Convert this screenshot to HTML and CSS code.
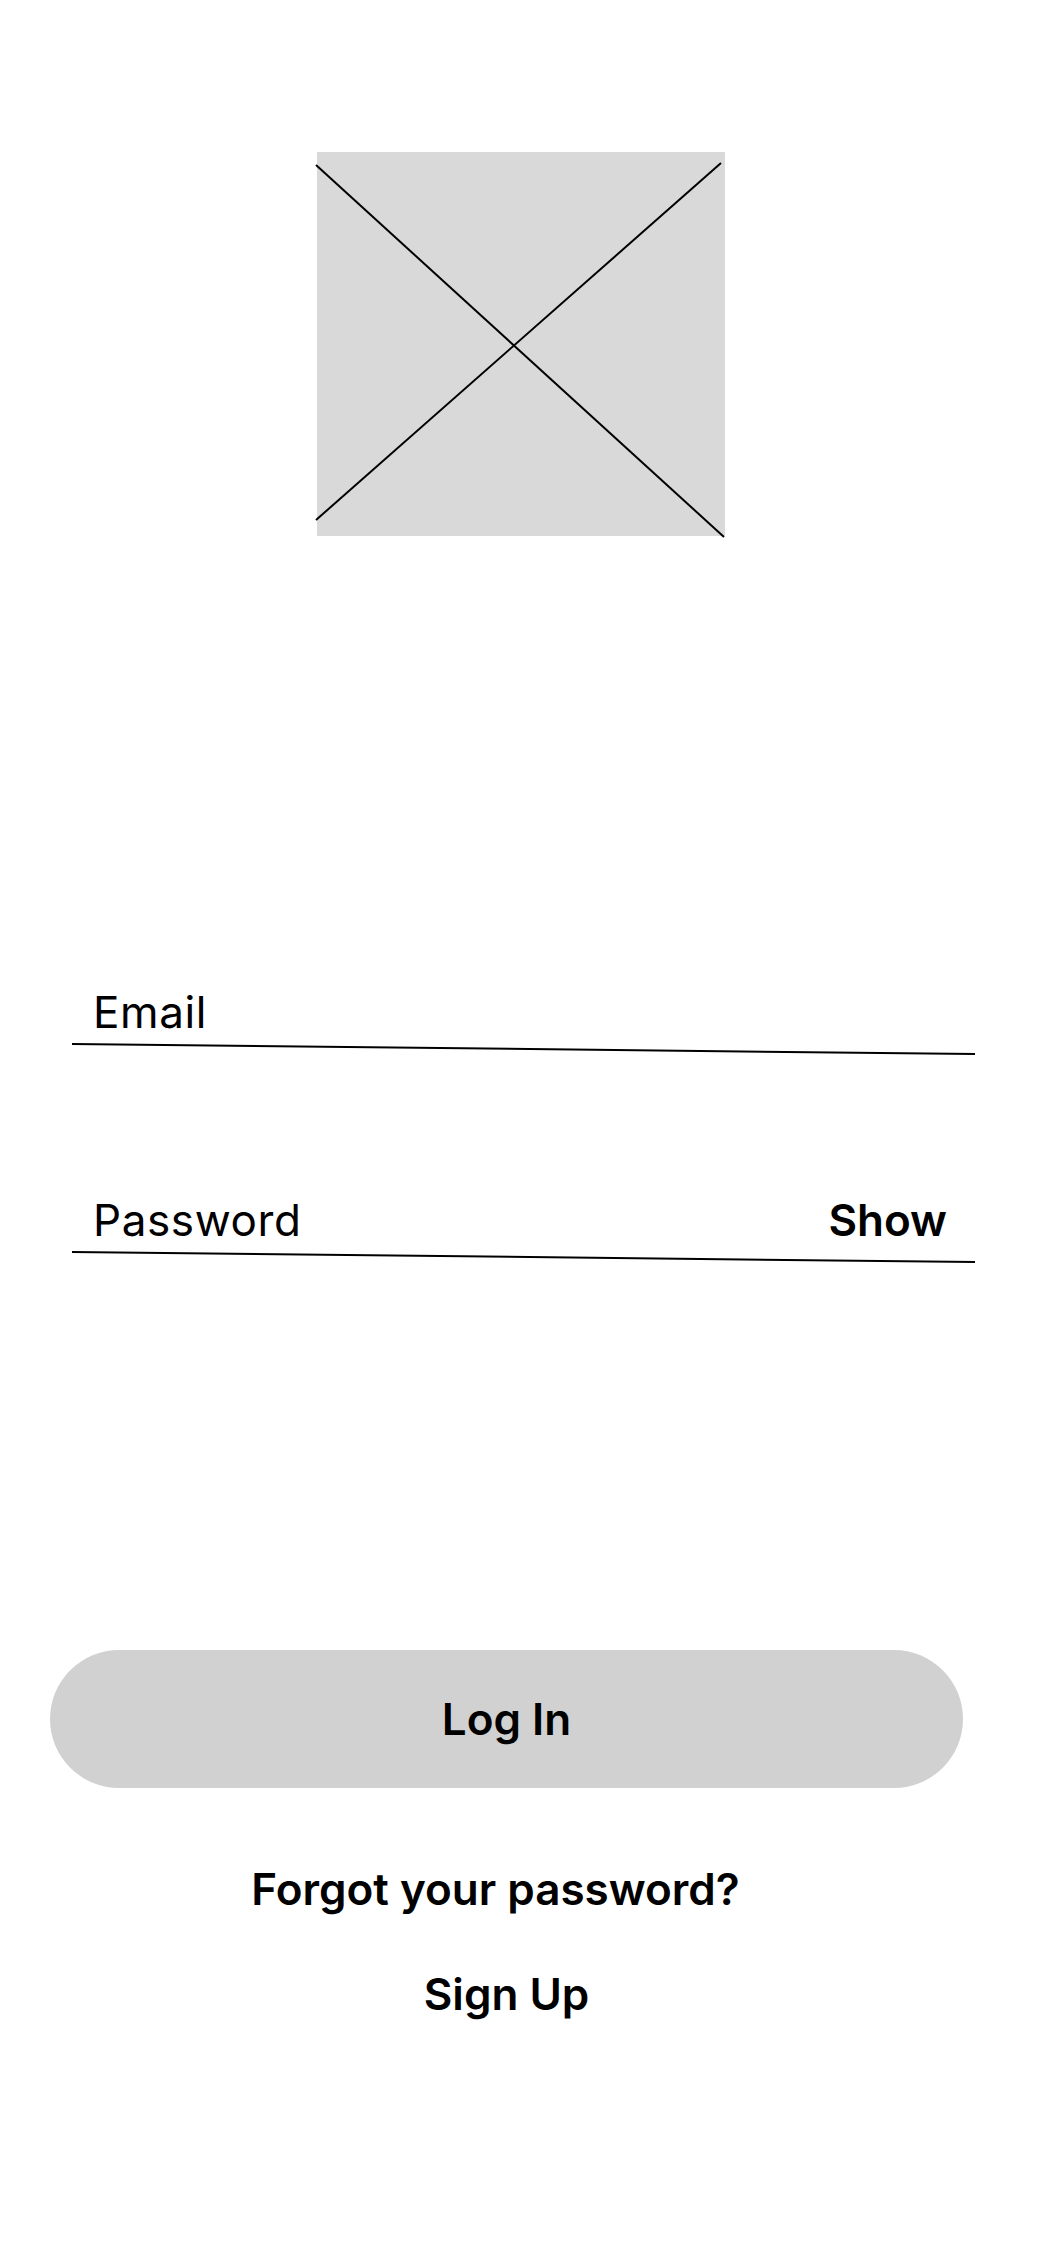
FILE: index.html
```html
<!DOCTYPE html>
<html lang="en">
<head>
    <meta charset="UTF-8">
    <meta name="viewport" content="width=device-width, initial-scale=1.0">
    <title>Log In</title>
    <link rel="stylesheet" href="styles.css">
</head>
<body>
    <div class="page">
        <div class="logo-area">
            <div class="logo-placeholder">
                <svg class="cross" viewBox="0 0 408 384" width="408" height="384">
                    <line x1="-1" y1="13" x2="407" y2="385" stroke="#000" stroke-width="2"/>
                    <line x1="-1" y1="368" x2="404" y2="11" stroke="#000" stroke-width="2"/>
                </svg>
            </div>
        </div>

        <form class="login-form" onsubmit="return false;">
            <div class="field field-email">
                <div class="field-row">
                    <span class="field-label">Email</span>
                </div>
                <svg class="field-line" viewBox="0 0 903 12" width="903" height="12" preserveAspectRatio="none">
                    <line x1="0" y1="1" x2="903" y2="11" stroke="#000" stroke-width="2"/>
                </svg>
            </div>
            <div class="field field-password">
                <div class="field-row">
                    <span class="field-label">Password</span>
                    <span class="field-toggle">Show</span>
                </div>
                <svg class="field-line" viewBox="0 0 903 12" width="903" height="12" preserveAspectRatio="none">
                    <line x1="0" y1="1" x2="903" y2="11" stroke="#000" stroke-width="2"/>
                </svg>
            </div>

            <button class="login-button" type="submit">Log In</button>

            <div class="links">
                <a class="link link-forgot" href="#">Forgot your password?</a>
                <a class="link link-signup" href="#">Sign Up</a>
            </div>
        </form>
    </div>
</body>
</html>
```

FILE: styles.css
```css
body {
    margin: 0;
    padding: 0;
    background-color: #fff;
    font-family: 'Inter', 'Noto Sans', sans-serif;
    color: #000;
}
.page {
    width: 1042px;
    min-height: 2256px;
    display: flex;
    flex-direction: column;
}
.logo-area {
    display: flex;
    justify-content: center;
    padding-top: 152px;
}
.logo-placeholder {
    width: 408px;
    height: 384px;
    background-color: #d9d9d9;
}
.cross {
    display: block;
    overflow: visible;
}
.login-form {
    display: flex;
    flex-direction: column;
    margin-top: 450px;
}
.field {
    display: flex;
    flex-direction: column;
    margin-left: 72px;
    width: 903px;
}
.field-password {
    margin-top: 139px;
}
.field-row {
    display: flex;
    justify-content: space-between;
    align-items: baseline;
    padding: 0 28px 0 21px;
    font-size: 44px;
    line-height: 52px;
}
.field-label {
    font-weight: 400;
    letter-spacing: 0.6px;
}
.field-toggle {
    font-weight: 600;
}
.field-line {
    display: block;
    margin-top: 5px;
}
.login-button {
    margin: 387px 0 0 50px;
    width: 913px;
    height: 138px;
    border: none;
    border-radius: 69px;
    background-color: #d1d1d1;
    font-family: inherit;
    font-size: 44px;
    font-weight: 600;
    color: #000;
    cursor: pointer;
}
.links {
    display: flex;
    flex-direction: column;
    align-items: center;
    margin-left: 50px;
    width: 913px;
    margin-top: 75px;
    gap: 53px;
}
.link {
    color: #000;
    text-decoration: none;
    font-size: 44px;
    line-height: 52px;
    font-weight: 600;
}
.link-forgot {
    padding-right: 22px;
}
```
